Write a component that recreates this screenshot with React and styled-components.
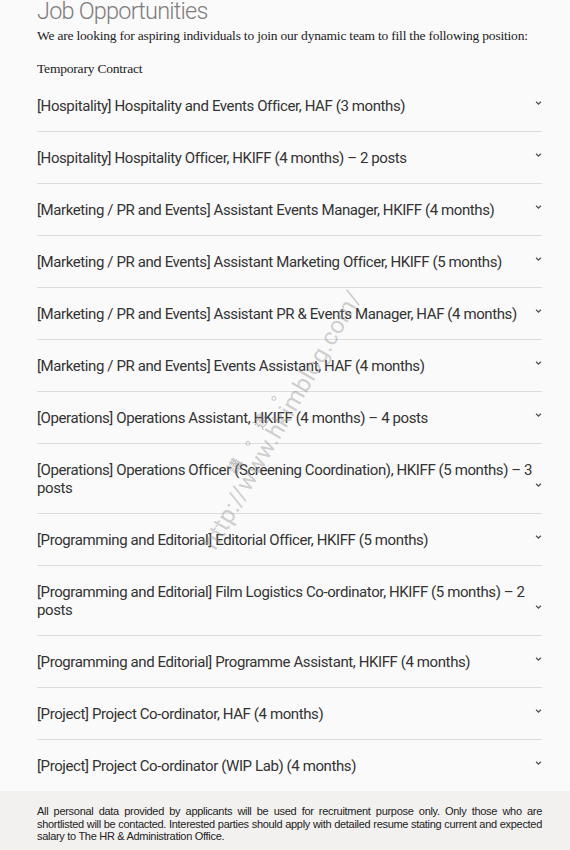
import styled, { createGlobalStyle } from 'styled-components';

const jobs = [
  '[Hospitality] Hospitality and Events Officer, HAF (3 months)',
  '[Hospitality] Hospitality Officer, HKIFF (4 months) – 2 posts',
  '[Marketing / PR and Events] Assistant Events Manager, HKIFF (4 months)',
  '[Marketing / PR and Events] Assistant Marketing Officer, HKIFF (5 months)',
  '[Marketing / PR and Events] Assistant PR & Events Manager, HAF (4 months)',
  '[Marketing / PR and Events] Events Assistant, HAF (4 months)',
  '[Operations] Operations Assistant, HKIFF (4 months) – 4 posts',
  '[Operations] Operations Officer (Screening Coordination), HKIFF (5 months) – 3 posts',
  '[Programming and Editorial] Editorial Officer, HKIFF (5 months)',
  '[Programming and Editorial] Film Logistics Co-ordinator, HKIFF (5 months) – 2 posts',
  '[Programming and Editorial] Programme Assistant, HKIFF (4 months)',
  '[Project] Project Co-ordinator, HAF (4 months)',
  '[Project] Project Co-ordinator (WIP Lab) (4 months)',
];

const notice = [
  'All personal data provided by applicants will be used for recruitment purpose only. Only those who are',
  'shortlisted will be contacted. Interested parties should apply with detailed resume stating current and expected',
  'salary to The HR & Administration Office.',
];

function Chevron() {
  return (
    <svg width="8" height="6" viewBox="0 0 8 6">
      <path d="M1.2 1.5 L4 4.2 L6.8 1.5" fill="none" stroke="#555" strokeWidth="1.4" />
    </svg>
  );
}

function App() {
  return (
    <>
      <GlobalStyle />
      <Page>
        <Main>
          <Title>Job Opportunities</Title>
          <Intro>We are looking for aspiring individuals to join our dynamic team to fill the following position:</Intro>
          <Section>Temporary Contract</Section>
          <JobList>
            {jobs.map((job, i) => (
              <JobRow key={job} $last={i === jobs.length - 1}>
                <JobTitle>{job}</JobTitle>
                <Toggle>
                  <Chevron />
                </Toggle>
              </JobRow>
            ))}
          </JobList>
          <Watermark>
            <WatermarkCjk>講。達。</WatermarkCjk>
            <WatermarkUrl>http://www.hkimblog.com/</WatermarkUrl>
          </Watermark>
        </Main>
        <Footer>
          {notice.map((line, i) => (
            <FooterLine key={line} $justify={i < notice.length - 1}>
              {line}
            </FooterLine>
          ))}
        </Footer>
      </Page>
    </>
  );
}

export default App;

const GlobalStyle = createGlobalStyle`
  html, body {
    margin: 0;
    padding: 0;
    background: #fafafa;
  }
`;

const Page = styled.div`
  width: 570px;
  height: 850px;
  overflow: hidden;
  display: flex;
  flex-direction: column;
`;

const Main = styled.div`
  position: relative;
  padding: 0 28px 0 37px;
`;

const Title = styled.h1`
  margin: -4px 0 0;
  font-family: Roboto, 'Liberation Sans', sans-serif;
  font-weight: 300;
  font-size: 23.5px;
  letter-spacing: -0.8px;
  line-height: 30px;
  color: #7e7e7e;
`;

const Intro = styled.p`
  margin: 1px 0 0;
  font-family: 'Liberation Serif', serif;
  font-size: 13.5px;
  letter-spacing: -0.2px;
  line-height: 18px;
  color: #222;
`;

const Section = styled.p`
  margin: 15px 0 0;
  font-family: 'Liberation Serif', serif;
  font-size: 13.5px;
  letter-spacing: -0.2px;
  line-height: 18px;
  color: #222;
`;

const JobList = styled.div`
  margin-top: 2px;
`;

const JobRow = styled.div`
  display: flex;
  align-items: flex-end;
  padding: 17px 0 16px;
  border-bottom: ${(p) => (p.$last ? 'none' : '1px solid #dcdcdc')};
`;

const JobTitle = styled.div`
  flex: 1;
  font-family: Roboto, 'Liberation Sans', sans-serif;
  font-size: 15px;
  letter-spacing: -0.4px;
  line-height: 18px;
  color: #333;
`;

const Toggle = styled.div`
  width: 7px;
  display: flex;
  justify-content: flex-end;
  margin-bottom: 9px;
`;

const Watermark = styled.div`
  position: absolute;
  left: 127px;
  top: 392px;
  width: 300px;
  transform: rotate(-60deg);
  pointer-events: none;
  color: rgba(150, 150, 150, 0.45);
  font-family: Roboto, 'Liberation Sans', sans-serif;
`;

const WatermarkCjk = styled.div`
  margin: 0 0 -6px 76px;
  font-family: 'Noto Sans CJK TC', sans-serif;
  font-size: 15px;
  letter-spacing: 11px;
  color: rgba(140, 140, 140, 0.6);
`;

const WatermarkUrl = styled.div`
  font-size: 24px;
  letter-spacing: 0.3px;
`;

const Footer = styled.div`
  flex: 1;
  padding: 14px 28px 0 37px;
  background: #f2f1ef;
  font-family: 'Liberation Sans', Arial, sans-serif;
  font-size: 11px;
  letter-spacing: -0.3px;
  line-height: 12.5px;
  color: #222;
`;

const FooterLine = styled.div`
  white-space: nowrap;
  text-align: justify;
  text-align-last: ${(p) => (p.$justify ? 'justify' : 'left')};
`;
